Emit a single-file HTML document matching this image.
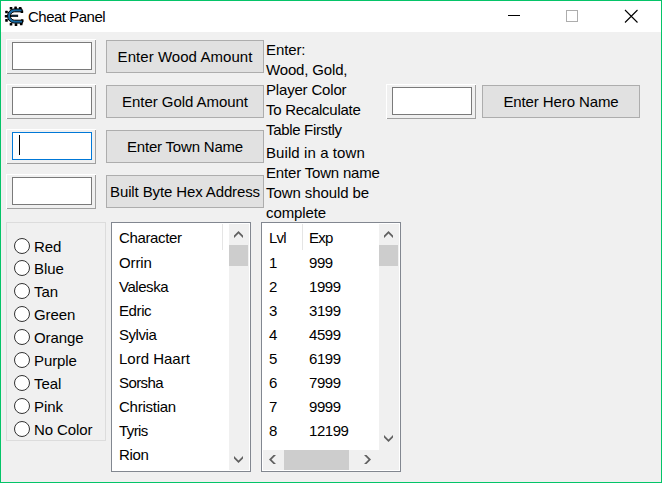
<!DOCTYPE html>
<html><head><meta charset="utf-8"><style>
html,body{margin:0;padding:0}
body{width:662px;height:483px;position:relative;overflow:hidden;background:#f0f0f0;font-family:"Liberation Sans", sans-serif;font-size:15px;color:#000}
.t{position:absolute;white-space:pre;line-height:17px;font-size:15px}
.btn{position:absolute;box-sizing:border-box;width:158px;height:33px;background:#e1e1e1;border:1px solid #adadad;text-align:center;line-height:31px;white-space:pre}
</style></head><body>
<div style="position:absolute;left:0;top:0;width:662px;height:32px;background:#fff"></div>
<div style="position:absolute;left:0;top:0;width:660px;height:481px;border:1px solid #04c468"></div>
<div style="position:absolute;left:1px;top:32px;width:658px;height:448px;border:1px solid #f0f0f0;border-top:0"></div>
<svg style="position:absolute;left:4px;top:6px" width="20" height="20" viewBox="0 0 20 20">
<g fill="#000"><rect x="5.70" y="1.00" width="2.6" height="2.6" rx="0.5"/><rect x="10.30" y="0.60" width="2.6" height="2.6" rx="0.5"/><rect x="14.90" y="1.10" width="2.6" height="2.6" rx="0.5"/><rect x="1.20" y="4.70" width="2.6" height="2.6" rx="0.5"/><rect x="0.80" y="8.90" width="2.6" height="2.6" rx="0.5"/><rect x="1.20" y="13.10" width="2.6" height="2.6" rx="0.5"/><rect x="5.70" y="16.90" width="2.6" height="2.6" rx="0.5"/><rect x="10.70" y="17.30" width="2.6" height="2.6" rx="0.5"/><rect x="15.90" y="16.60" width="2.6" height="2.6" rx="0.5"/><rect x="16.60" y="4.30" width="2.6" height="2.6" rx="0.5"/><rect x="16.90" y="13.30" width="2.6" height="2.6" rx="0.5"/></g>
<path d="M18.0 2.9 L10.6 2.9 A7.1 7.1 0 0 0 10.6 17.1 L18.6 17.1 L18.6 14.2 L10.6 14.2 A4.2 4.2 0 0 1 10.6 5.8 L18.0 5.8 Z" fill="#176aa3" stroke="#000" stroke-width="1" stroke-linejoin="round"/>
<rect x="7.4" y="9.0" width="6.4" height="1.7" fill="#0b3350" stroke="#000" stroke-width="0.6"/>
</svg>
<div class="t" style="left:28px;top:8px;letter-spacing:-0.5px">Cheat Panel</div>
<div style="position:absolute;left:508px;top:15px;width:12px;height:1px;background:#000"></div>
<div style="position:absolute;left:566px;top:10px;width:10px;height:10px;border:1px solid #adadad"></div>
<svg style="position:absolute;left:624px;top:9px" width="15" height="15" viewBox="0 0 15 15"><path d="M1 1 L13.5 13.5 M13.5 1 L1 13.5" stroke="#000" stroke-width="1.1"/></svg>
<div style="position:absolute;left:6px;top:39px;width:89px;height:34px;background:#f0f0f0;border-left:1px solid #fff;border-top:1px solid #fff;box-shadow:inset -1px -1px 0 #a0a0a0"></div>
<div style="position:absolute;left:12px;top:42px;width:78px;height:26px;background:#fff;border:1px solid #7a7a7a"></div>
<div class="btn" style="left:106px;top:40px;letter-spacing:0.05px;">Enter Wood Amount</div>
<div style="position:absolute;left:6px;top:84px;width:89px;height:34px;background:#f0f0f0;border-left:1px solid #fff;border-top:1px solid #fff;box-shadow:inset -1px -1px 0 #a0a0a0"></div>
<div style="position:absolute;left:12px;top:87px;width:78px;height:26px;background:#fff;border:1px solid #7a7a7a"></div>
<div class="btn" style="left:106px;top:85px;letter-spacing:-0.05px;">Enter Gold Amount</div>
<div style="position:absolute;left:6px;top:129px;width:89px;height:34px;background:#f0f0f0;border-left:1px solid #fff;border-top:1px solid #fff;box-shadow:inset -1px -1px 0 #a0a0a0"></div>
<div style="position:absolute;left:12px;top:132px;width:78px;height:26px;background:#fff;border:1px solid #0078d7"></div>
<div style="position:absolute;left:19px;top:135px;width:1px;height:20px;background:#000"></div>
<div class="btn" style="left:106px;top:130px;letter-spacing:-0.2px;">Enter Town Name</div>
<div style="position:absolute;left:6px;top:174px;width:89px;height:34px;background:#f0f0f0;border-left:1px solid #fff;border-top:1px solid #fff;box-shadow:inset -1px -1px 0 #a0a0a0"></div>
<div style="position:absolute;left:12px;top:177px;width:78px;height:26px;background:#fff;border:1px solid #7a7a7a"></div>
<div class="btn" style="left:106px;top:175px;letter-spacing:-0.12px;">Built Byte Hex Address</div>
<div style="position:absolute;left:386px;top:84px;width:89px;height:34px;background:#f0f0f0;border-left:1px solid #fff;border-top:1px solid #fff;box-shadow:inset -1px -1px 0 #a0a0a0"></div>
<div style="position:absolute;left:392px;top:87px;width:78px;height:26px;background:#fff;border:1px solid #7a7a7a"></div>
<div class="btn" style="left:482px;top:85px;letter-spacing:-0.1px;">Enter Hero Name</div>
<div class="t" style="left:266px;top:41px;letter-spacing:-0.1px;">Enter:</div>
<div class="t" style="left:266px;top:61px;letter-spacing:-0.16px;">Wood, Gold,</div>
<div class="t" style="left:266px;top:81px;letter-spacing:-0.18px;">Player Color</div>
<div class="t" style="left:266px;top:101px;letter-spacing:-0.28px;">To Recalculate</div>
<div class="t" style="left:266px;top:121px;letter-spacing:-0.33px;">Table Firstly</div>
<div class="t" style="left:266px;top:144px;letter-spacing:0.09px;">Build in a town</div>
<div class="t" style="left:266px;top:164px;letter-spacing:-0.18px;">Enter Town name</div>
<div class="t" style="left:266px;top:184px;letter-spacing:-0.08px;">Town should be</div>
<div class="t" style="left:266px;top:204px;letter-spacing:-0.1px;">complete</div>
<div style="position:absolute;left:6px;top:222px;width:98px;height:217px;border:1px solid #dcdcdc"></div>
<div style="position:absolute;left:14px;top:238px;width:14px;height:14px;border:1px solid #333;border-radius:50%;background:#fff"></div>
<div class="t" style="left:34px;top:238px;letter-spacing:-0.1px;">Red</div>
<div style="position:absolute;left:14px;top:260px;width:14px;height:14px;border:1px solid #333;border-radius:50%;background:#fff"></div>
<div class="t" style="left:34px;top:260px;letter-spacing:-0.1px;">Blue</div>
<div style="position:absolute;left:14px;top:283px;width:14px;height:14px;border:1px solid #333;border-radius:50%;background:#fff"></div>
<div class="t" style="left:34px;top:283px;letter-spacing:-0.1px;">Tan</div>
<div style="position:absolute;left:14px;top:306px;width:14px;height:14px;border:1px solid #333;border-radius:50%;background:#fff"></div>
<div class="t" style="left:34px;top:306px;letter-spacing:-0.1px;">Green</div>
<div style="position:absolute;left:14px;top:329px;width:14px;height:14px;border:1px solid #333;border-radius:50%;background:#fff"></div>
<div class="t" style="left:34px;top:329px;letter-spacing:-0.1px;">Orange</div>
<div style="position:absolute;left:14px;top:352px;width:14px;height:14px;border:1px solid #333;border-radius:50%;background:#fff"></div>
<div class="t" style="left:34px;top:352px;letter-spacing:-0.1px;">Purple</div>
<div style="position:absolute;left:14px;top:375px;width:14px;height:14px;border:1px solid #333;border-radius:50%;background:#fff"></div>
<div class="t" style="left:34px;top:375px;letter-spacing:-0.1px;">Teal</div>
<div style="position:absolute;left:14px;top:398px;width:14px;height:14px;border:1px solid #333;border-radius:50%;background:#fff"></div>
<div class="t" style="left:34px;top:398px;letter-spacing:-0.1px;">Pink</div>
<div style="position:absolute;left:14px;top:421px;width:14px;height:14px;border:1px solid #333;border-radius:50%;background:#fff"></div>
<div class="t" style="left:34px;top:421px;letter-spacing:-0.1px;">No Color</div>
<div style="position:absolute;left:111px;top:222px;width:138px;height:248px;border:1px solid #828790;background:#fff"></div>
<div style="position:absolute;left:229px;top:224px;width:20px;height:246px;background:#f0f0f0"></div>
<div style="position:absolute;left:229px;top:245px;width:19px;height:21px;background:#cdcdcd"></div>
<svg style="position:absolute;left:0;top:0" width="662" height="483"><g fill="#606060"><path d="M234 235.5 L238.5 231 L243 235.5 L243 238 L238.5 233.5 L234 238 Z"/><path d="M234 456 L238.5 460.5 L243 456 L243 458.5 L238.5 463 L234 458.5 Z"/></g></svg>
<div class="t" style="left:119px;top:229px;letter-spacing:-0.35px;">Character</div>
<div style="position:absolute;left:222px;top:224px;width:1px;height:26px;background:#e5e5e5"></div>
<div class="t" style="left:119px;top:254px;letter-spacing:-0.1px;">Orrin</div>
<div class="t" style="left:119px;top:278px;letter-spacing:-0.45px;">Valeska</div>
<div class="t" style="left:119px;top:302px;letter-spacing:-0.4px;">Edric</div>
<div class="t" style="left:119px;top:326px;letter-spacing:-0.45px;">Sylvia</div>
<div class="t" style="left:119px;top:350px;letter-spacing:0.0px;">Lord Haart</div>
<div class="t" style="left:119px;top:374px;letter-spacing:-0.6px;">Sorsha</div>
<div class="t" style="left:119px;top:398px;letter-spacing:-0.25px;">Christian</div>
<div class="t" style="left:119px;top:422px;letter-spacing:-0.6px;">Tyris</div>
<div class="t" style="left:119px;top:446px;letter-spacing:-0.3px;">Rion</div>
<div style="position:absolute;left:261px;top:222px;width:138px;height:248px;border:1px solid #828790;background:#fff"></div>
<div style="position:absolute;left:379px;top:224px;width:20px;height:226px;background:#f0f0f0"></div>
<div style="position:absolute;left:379px;top:245px;width:19px;height:21px;background:#cdcdcd"></div>
<div style="position:absolute;left:263px;top:450px;width:136px;height:20px;background:#f0f0f0"></div>
<div style="position:absolute;left:284px;top:450px;width:65px;height:20px;background:#cdcdcd"></div>
<svg style="position:absolute;left:0;top:0" width="662" height="483"><g fill="#606060"><path d="M384 235.5 L388.5 231 L393 235.5 L393 238 L388.5 233.5 L384 238 Z"/><path d="M384 435 L388.5 439.5 L393 435 L393 437.5 L388.5 442 L384 437.5 Z"/><path d="M269 459.5 L273.5 455 L276 455 L271.5 459.5 L276 464 L273.5 464 Z"/><path d="M371 459.5 L366.5 455 L364 455 L368.5 459.5 L364 464 L366.5 464 Z"/></g></svg>
<div class="t" style="left:269px;top:229px;letter-spacing:-0.8px;">Lvl</div>
<div style="position:absolute;left:302px;top:224px;width:1px;height:26px;background:#e5e5e5"></div>
<div class="t" style="left:309px;top:229px;letter-spacing:-0.8px;">Exp</div>
<div class="t" style="left:269px;top:254px;letter-spacing:-0.45px;">1</div>
<div class="t" style="left:309px;top:254px;letter-spacing:-0.45px;">999</div>
<div class="t" style="left:269px;top:278px;letter-spacing:-0.45px;">2</div>
<div class="t" style="left:309px;top:278px;letter-spacing:-0.45px;">1999</div>
<div class="t" style="left:269px;top:302px;letter-spacing:-0.45px;">3</div>
<div class="t" style="left:309px;top:302px;letter-spacing:-0.45px;">3199</div>
<div class="t" style="left:269px;top:326px;letter-spacing:-0.45px;">4</div>
<div class="t" style="left:309px;top:326px;letter-spacing:-0.45px;">4599</div>
<div class="t" style="left:269px;top:350px;letter-spacing:-0.45px;">5</div>
<div class="t" style="left:309px;top:350px;letter-spacing:-0.45px;">6199</div>
<div class="t" style="left:269px;top:374px;letter-spacing:-0.45px;">6</div>
<div class="t" style="left:309px;top:374px;letter-spacing:-0.45px;">7999</div>
<div class="t" style="left:269px;top:398px;letter-spacing:-0.45px;">7</div>
<div class="t" style="left:309px;top:398px;letter-spacing:-0.45px;">9999</div>
<div class="t" style="left:269px;top:422px;letter-spacing:-0.45px;">8</div>
<div class="t" style="left:309px;top:422px;letter-spacing:-0.45px;">12199</div>
</body></html>
